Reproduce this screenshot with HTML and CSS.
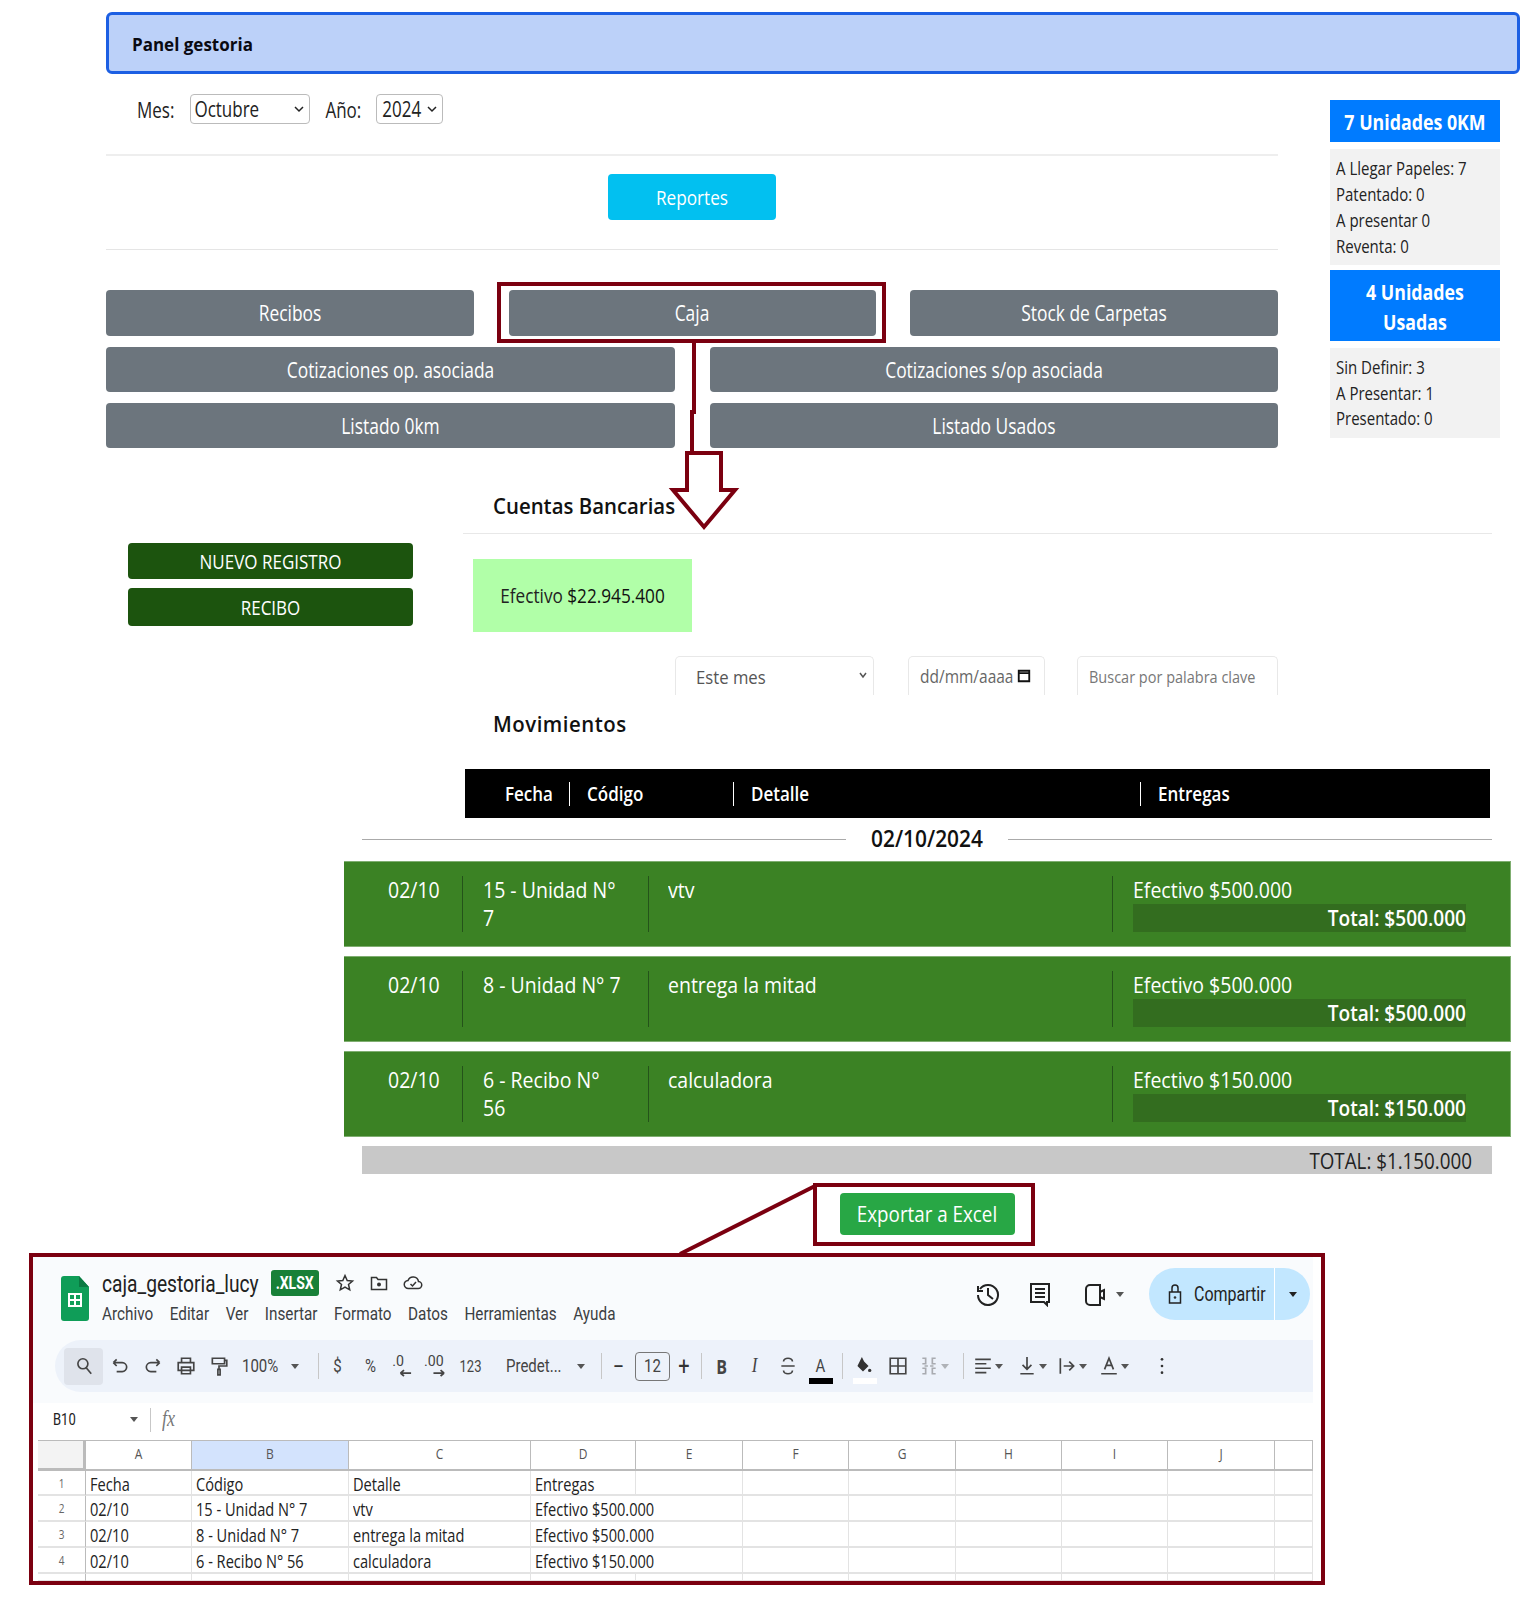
FILE: index.html
```html
<!DOCTYPE html>
<html lang="es">
<head>
<meta charset="utf-8">
<title>Panel gestoria</title>
<link rel="stylesheet" href="styles.css">
</head>
<body>
<div class="page">
  <header class="panel"><span class="t">Panel gestoria</span></header>

  <div class="top">
    <div class="top-main">
      <div class="period">
        <span class="t">Mes:</span>
        <div class="pick pick-mes"><span class="t">Octubre</span><svg class="chev" viewBox="0 0 10 8"><path d="M1 2l4 4 4-4"/></svg></div>
        <span class="t lbl-ano">Año:</span>
        <div class="pick pick-ano"><span class="t">2024</span><svg class="chev" viewBox="0 0 10 8"><path d="M1 2l4 4 4-4"/></svg></div>
      </div>
      <div class="rule rule-a"></div>
      <div class="center"><a class="btn btn-info"><span class="t">Reportes</span></a></div>
      <div class="rule rule-b"></div>
      <div class="btn-row three">
        <a class="btn btn-gray"><span class="t">Recibos</span></a>
        <a class="btn btn-gray"><span class="t">Caja</span></a>
        <a class="btn btn-gray"><span class="t">Stock de Carpetas</span></a>
      </div>
      <div class="btn-row two">
        <a class="btn btn-gray"><span class="t">Cotizaciones op. asociada</span></a>
        <a class="btn btn-gray"><span class="t">Cotizaciones s/op asociada</span></a>
      </div>
      <div class="btn-row two">
        <a class="btn btn-gray"><span class="t">Listado 0km</span></a>
        <a class="btn btn-gray"><span class="t">Listado Usados</span></a>
      </div>
    </div>
    <aside class="stats">
      <div class="stat-h"><span class="t">7 Unidades 0KM</span></div>
      <ul class="stat-l stat-a">
        <li><span class="t">A Llegar Papeles: 7</span></li>
        <li><span class="t">Patentado: 0</span></li>
        <li><span class="t">A presentar 0</span></li>
        <li><span class="t">Reventa: 0</span></li>
      </ul>
      <div class="stat-h stat-h2"><span class="t">4 Unidades</span><br><span class="t">Usadas</span></div>
      <ul class="stat-l stat-b">
        <li><span class="t">Sin Definir: 3</span></li>
        <li><span class="t">A Presentar: 1</span></li>
        <li><span class="t">Presentado: 0</span></li>
      </ul>
    </aside>
  </div>

  <div class="accounts">
    <div class="side">
      <a class="btn btn-green b1"><span class="t">NUEVO REGISTRO</span></a>
      <a class="btn btn-green b2"><span class="t">RECIBO</span></a>
    </div>
    <section class="acc-main">
      <h2 class="title title-a"><span class="t">Cuentas Bancarias</span></h2>
      <div class="rule rule-c"></div>
      <div class="bank"><span class="t">Efectivo <b>$22.945.400</b></span></div>
      <div class="filters">
        <div class="fld fld-sel"><span class="t">Este mes</span><svg class="chev" viewBox="0 0 10 8"><path d="M2 2l3 4 3-4"/></svg></div>
        <div class="fld fld-date"><span class="t">dd/mm/aaaa</span><svg class="cal" viewBox="0 0 12 12"><path d="M1.5 1.5h9v9h-9zM1.5 3.5h9"/></svg></div>
        <div class="fld fld-q"><span class="t">Buscar por palabra clave</span></div>
      </div>
      <h2 class="title title-b"><span class="t">Movimientos</span></h2>
      <div class="thead">
        <div class="th th1"><span class="t">Fecha</span></div>
        <div class="th th2"><span class="t">Código</span></div>
        <div class="th th3"><span class="t">Detalle</span></div>
        <div class="th th4"><span class="t">Entregas</span></div>
      </div>
    </section>
  </div>

  <section class="moves">
    <div class="day"><i></i><b class="t">02/10/2024</b><i></i></div>
    <article class="mv">
      <div class="c c1"><span class="t">02/10</span></div>
      <div class="c c2"><span class="t">15 - Unidad N°</span><br><span class="t">7</span></div>
      <div class="c c3"><span class="t">vtv</span></div>
      <div class="c c4"><span class="t">Efectivo $500.000</span><div class="tot"><span class="t">Total: $500.000</span></div></div>
    </article>
    <article class="mv">
      <div class="c c1"><span class="t">02/10</span></div>
      <div class="c c2"><span class="t">8 - Unidad N° 7</span></div>
      <div class="c c3"><span class="t">entrega la mitad</span></div>
      <div class="c c4"><span class="t">Efectivo $500.000</span><div class="tot"><span class="t">Total: $500.000</span></div></div>
    </article>
    <article class="mv">
      <div class="c c1"><span class="t">02/10</span></div>
      <div class="c c2"><span class="t">6 - Recibo N°</span><br><span class="t">56</span></div>
      <div class="c c3"><span class="t">calculadora</span></div>
      <div class="c c4"><span class="t">Efectivo $150.000</span><div class="tot"><span class="t">Total: $150.000</span></div></div>
    </article>
    <div class="grand"><span class="t">TOTAL: $1.150.000</span></div>
    <div class="export"><a class="btn btn-excel"><span class="t">Exportar a Excel</span></a></div>
  </section>

  <section class="sheet">
    <div class="sheet-top">
      <div class="sh-head">
        <svg class="sh-logo" viewBox="0 0 28 45"><path fill="#0f9d58" d="M3 0h15l10 11v31a3 3 0 0 1-3 3H3a3 3 0 0 1-3-3V3a3 3 0 0 1 3-3z"/><path fill="#0a7a42" d="M18 0l10 11H18z"/><path fill="none" stroke="#fff" stroke-width="2" d="M8 18h12v12H8zM14 18v12M8 24h12"/></svg>
        <div class="sh-titles">
          <div class="sh-name">
            <span class="t doc">caja_gestoria_lucy</span>
            <span class="badge"><span class="t">.XLSX</span></span>
            <svg class="ic20 star" viewBox="0 0 20 20"><path d="M10 2.5l2.2 5 5.3.5-4 3.5 1.2 5.3L10 14l-4.7 2.8 1.2-5.3-4-3.5 5.3-.5z"/></svg>
            <svg class="ic20" viewBox="0 0 20 20"><path d="M2.5 4.5h5l1.500 2h8.500v10h-15z"/><circle cx="10" cy="11.500" r="2" class="fillk"/></svg>
            <svg class="ic20" viewBox="0 0 20 20"><path d="M5.500 15.500a4 4 0 0 1-.5-8 5.500 5.500 0 0 1 10.500 1 3.500 3.500 0 0 1-.5 7zM7.500 11l2 2 3.500-4"/></svg>
          </div>
          <nav class="sh-menu">
            <span class="t m1">Archivo</span><span class="t m2">Editar</span><span class="t m3">Ver</span><span class="t m4">Insertar</span><span class="t m5">Formato</span><span class="t m6">Datos</span><span class="t m7">Herramientas</span><span class="t m8">Ayuda</span>
          </nav>
        </div>
        <div class="sh-actions">
          <svg class="ic26" viewBox="0 0 26 26"><path d="M5 8a10 10 0 1 1-2 6M3 5v5h5M13 7v7l5 4"/></svg>
          <svg class="ic26 gap-c" viewBox="0 0 26 26"><path d="M4 3h18v18h-2v3l-3-3H4zM8 8h10M8 12h10M8 16h10"/></svg>
          <svg class="ic26 gap-v" viewBox="0 0 26 26"><path d="M4 8a4 4 0 0 1 4-4h10v20H8a4 4 0 0 1-4-4zM18 11l4-2v9l-4-2" /></svg>
          <svg class="caret gap-k" viewBox="0 0 8 5"><path d="M0 0h8L4 5z"/></svg>
          <div class="share">
            <div class="share-main">
              <svg class="lock" viewBox="0 0 14 22"><path d="M1.500 9h11v11h-11zM4 9V5a3 3 0 0 1 6 0v4"/><circle cx="7" cy="14.500" r="1.300" class="fillk"/></svg>
              <span class="t">Compartir</span>
            </div>
            <div class="share-more"><svg class="caret dark" viewBox="0 0 8 5"><path d="M0 0h8L4 5z"/></svg></div>
          </div>
        </div>
      </div>

      <div class="tools">
        <div class="i sb"><svg viewBox="0 0 18 18"><circle cx="8" cy="7" r="4.500"/><path d="M11 10.500l4.500 5.500"/></svg></div>
        <div class="i"><svg viewBox="0 0 18 18"><path d="M3 6h8a3.500 3.500 0 0 1 0 8H6M3 6l3-3M3 6l3 3"/></svg></div>
        <div class="i"><svg viewBox="0 0 18 18"><path d="M15 6H7a3.500 3.500 0 0 0 0 8h5M15 6l-3-3M15 6l-3 3"/></svg></div>
        <div class="i"><svg viewBox="0 0 18 18"><path d="M5 6V2h8v4M2 6h14v7H2zM5 10h8v6H5z"/></svg></div>
        <div class="i"><svg viewBox="0 0 18 18"><path d="M3 2h11v5H3zM14 4h2v5H9v3M8 12h2v5H8z"/></svg></div>
        <div class="txt zoom"><span class="t">100%</span><svg class="caret" viewBox="0 0 8 5"><path d="M0 0h8L4 5z"/></svg></div>
        <div class="sep s1"></div>
        <div class="i"><span class="t">$</span></div>
        <div class="i"><span class="t">%</span></div>
        <div class="i small"><svg viewBox="0 0 22 22"><text x="1" y="11" class="st">.0</text><path d="M8 17h9M8 17l3-2.500M8 17l3 2.500"/></svg></div>
        <div class="i small"><svg viewBox="0 0 22 22"><text x="0" y="11" class="st">.00</text><path d="M17 17H8M17 17l-3-2.500M17 17l-3 2.500"/></svg></div>
        <div class="i n123"><span class="t">123</span></div>
        <div class="txt font"><span class="t">Predet...</span><svg class="caret" viewBox="0 0 8 5"><path d="M0 0h8L4 5z"/></svg></div>
        <div class="sep s2"></div>
        <div class="i big"><span class="t">−</span></div>
        <div class="sizebox"><span class="t">12</span></div>
        <div class="i plus big"><span class="t">+</span></div>
        <div class="sep s3"></div>
        <div class="i bold"><span class="t">B</span></div>
        <div class="i ital"><span class="t">I</span></div>
        <div class="i"><svg viewBox="0 0 18 18"><path d="M5 5a4 3 0 0 1 8 0M5 13a4 3 0 0 0 8 0M3 9h12"/></svg></div>
        <div class="i colr"><span class="t">A</span><i class="bar blk"></i></div>
        <div class="sep s4"></div>
        <div class="i colr"><svg class="fillic" viewBox="0 0 18 18"><path class="fillk" d="M8 1l2 4 4 4-5 5-5-5z"/><circle class="fillk" cx="15" cy="13" r="1.500"/></svg><i class="bar wht"></i></div>
        <div class="i"><svg viewBox="0 0 18 18"><path d="M2 2h14v14H2zM9 2v14M2 9h14"/></svg></div>
        <div class="i2 w45 muted"><svg viewBox="0 0 18 18"><path d="M3 2h3v5H3M15 2h-3v5h3M3 16h3v-5H3M15 16h-3v-5h3M8 9H5M10 9h3"/></svg><svg class="caret" viewBox="0 0 8 5"><path d="M0 0h8L4 5z"/></svg></div>
        <div class="sep s5"></div>
        <div class="i2 w44"><svg viewBox="0 0 18 18"><path d="M2 3h14M2 7h10M2 11h14M2 15h10"/></svg><svg class="caret" viewBox="0 0 8 5"><path d="M0 0h8L4 5z"/></svg></div>
        <div class="i2 w44"><svg viewBox="0 0 18 18"><path d="M9 1v11M5 8l4 4 4-4M3 16h12"/></svg><svg class="caret" viewBox="0 0 8 5"><path d="M0 0h8L4 5z"/></svg></div>
        <div class="i2 w42"><svg viewBox="0 0 18 18"><path d="M3 2v14M6 9h9M11 5l4 4-4 4"/></svg><svg class="caret" viewBox="0 0 8 5"><path d="M0 0h8L4 5z"/></svg></div>
        <div class="i2 w42"><svg viewBox="0 0 18 18"><path d="M5 12L9 2l4 10M6.500 8.500h5M2 16h14"/></svg><svg class="caret" viewBox="0 0 8 5"><path d="M0 0h8L4 5z"/></svg></div>
        <div class="i dots"><svg viewBox="0 0 18 18"><circle class="fillk" cx="9" cy="3" r="1.200"/><circle class="fillk" cx="9" cy="9" r="1.200"/><circle class="fillk" cx="9" cy="15" r="1.200"/></svg></div>
      </div>
    </div>

    <div class="fx">
      <span class="t cellref">B10</span>
      <svg class="caret fxc" viewBox="0 0 8 5"><path d="M0 0h8L4 5z"/></svg>
      <div class="sep s6"></div>
      <span class="t fxl">fx</span>
    </div>

    <div class="grid">
      <div class="corner"></div><div class="ch"><span class="t">A</span></div><div class="ch on"><span class="t">B</span></div><div class="ch"><span class="t">C</span></div><div class="ch"><span class="t">D</span></div><div class="ch"><span class="t">E</span></div><div class="ch"><span class="t">F</span></div><div class="ch"><span class="t">G</span></div><div class="ch"><span class="t">H</span></div><div class="ch"><span class="t">I</span></div><div class="ch"><span class="t">J</span></div><div class="ch"></div>

      <div class="rh"><span class="t">1</span></div><div class="cl"><span class="t">Fecha</span></div><div class="cl"><span class="t">Código</span></div><div class="cl"><span class="t">Detalle</span></div><div class="cl"><span class="t">Entregas</span></div><div class="cl"></div><div class="cl"></div><div class="cl"></div><div class="cl"></div><div class="cl"></div><div class="cl"></div><div class="cl"></div>

      <div class="rh"><span class="t">2</span></div><div class="cl"><span class="t">02/10</span></div><div class="cl"><span class="t">15 - Unidad N° 7</span></div><div class="cl"><span class="t">vtv</span></div><div class="cl wide"><span class="t">Efectivo $500.000</span></div><div class="cl"></div><div class="cl"></div><div class="cl"></div><div class="cl"></div><div class="cl"></div><div class="cl"></div>

      <div class="rh"><span class="t">3</span></div><div class="cl"><span class="t">02/10</span></div><div class="cl"><span class="t">8 - Unidad N° 7</span></div><div class="cl"><span class="t">entrega la mitad</span></div><div class="cl wide"><span class="t">Efectivo $500.000</span></div><div class="cl"></div><div class="cl"></div><div class="cl"></div><div class="cl"></div><div class="cl"></div><div class="cl"></div>

      <div class="rh"><span class="t">4</span></div><div class="cl"><span class="t">02/10</span></div><div class="cl"><span class="t">6 - Recibo N° 56</span></div><div class="cl"><span class="t">calculadora</span></div><div class="cl wide"><span class="t">Efectivo $150.000</span></div><div class="cl"></div><div class="cl"></div><div class="cl"></div><div class="cl"></div><div class="cl"></div><div class="cl"></div>

      <div class="rh"></div><div class="cl"></div><div class="cl"></div><div class="cl"></div><div class="cl"></div><div class="cl"></div><div class="cl"></div><div class="cl"></div><div class="cl"></div><div class="cl"></div><div class="cl"></div><div class="cl"></div>
    </div>
  </section>

  <svg class="notes" viewBox="0 0 1522 1600" aria-hidden="true">
    <rect x="499" y="284" width="385" height="57"/>
    <path d="M694 343V412H692V453"/>
    <path d="M687 453H721V490H735L704 527 673 490H687Z" fill="#fff"/>
    <rect x="815" y="1185" width="218" height="59"/>
    <path d="M815 1186L680 1254"/>
  </svg>
</div>
</body>
</html>
```
FILE: styles.css
```css
* { box-sizing: border-box; }
html, body { margin: 0; padding: 0; background: #fff; }
body { font-family: "Open Sans", "Noto Sans", sans-serif; font-size: 16px; color: #212529; }
ul { list-style: none; margin: 0; padding: 0; }
h2 { margin: 0; }
.page { position: relative; width: 1522px; height: 1600px; overflow: hidden; padding-top: 12px; }
.t { display: inline-block; transform: scaleY(1.25); white-space: nowrap; }

.panel { margin-left: 106px; width: 1414px; height: 62px; border: 3px solid #1c5fe3; border-radius: 6px; background: #bcd1f9; padding-left: 23px; line-height: 60px; font-weight: 700; color: #0a0a12; font-size: 17px; }
.panel .t { transform: scaleY(1.08); }

.top { display: flex; margin-left: 106px; }
.top-main { width: 1172px; }
.period { display: flex; align-items: center; height: 30px; margin-top: 20px; padding-left: 31px; font-size: 17px; color: #222; }
.pick { position: relative; height: 30px; margin-left: 16px; background: #fff; border: 1px solid #bbb; border-radius: 4px; padding-left: 3px; line-height: 28px; }
.pick-mes { width: 120px; }
.pick-ano { width: 67px; margin-left: 15px; padding-left: 5px; }
.lbl-ano { margin-left: 15px; }
.chev { position: absolute; right: 5px; top: 10px; width: 10px; height: 8px; fill: none; stroke: #222; stroke-width: 1.500; }

.rule { height: 2px; background: #eee; }
.rule-a { margin-top: 30px; }
.center { display: flex; justify-content: center; margin-top: 18px; }
.rule-b { margin-top: 29px; height: 1px; background: #e5e5e5; }

.btn { display: flex; align-items: center; justify-content: center; color: #fff; border-radius: 4px; }
.btn-info { width: 168px; height: 46px; background: #02c0f0; font-size: 17.200px; }
.btn-info .t { transform: scaleY(1.2); }
.btn-row { display: grid; height: 45px; margin-top: 11px; }
.btn-row.three { grid-template-columns: 368px 367px 368px; gap: 34.500px; height: 46px; margin-top: 40px; }
.btn-row.two { grid-template-columns: 569px 568px; gap: 35px; }
.btn-gray { background: #6c757d; font-size: 17.400px; }
.btn-gray .t { transform: scaleY(1.2); }

.stats { width: 170px; margin-left: 52px; margin-top: 26px; color: #222; font-size: 15px; }
.stat-h { background: #007bff; color: #fff; font-weight: 700; font-size: 17.800px; text-align: center; height: 42px; line-height: 44px; }
.stat-h .t { transform: scaleY(1.2); }
.stat-h2 { height: 71px; line-height: 30px; padding-top: 7px; margin-top: 5px; }
.stat-l { margin-top: 7px; background: #f2f2f2; padding: 5px 6px; line-height: 26px; }
.stat-a { height: 116px; }
.stat-b { height: 90px; padding-top: 7px; line-height: 25.500px; }

.accounts { display: flex; margin-top: 30px; height: 340px; }
.side { width: 285px; margin-left: 128px; padding-top: 65px; }
.btn-green { background: #1c540e; font-size: 17px; }
.btn-green .t { transform: scaleY(1.12); }
.b1 { height: 36px; }
.b2 { height: 38px; margin-top: 9px; }
.acc-main { width: 1029px; margin-left: 50px; }
.title { font-size: 20.400px; font-weight: 600; color: #111; line-height: 28px; padding-left: 30px; }
.title .t { transform: scaleY(1.1); }
.title-a { padding-top: 13px; }
.rule-c { margin-top: 14px; height: 1px; background: #e8e8e8; }
.bank { width: 219px; height: 73px; margin: 25px 0 0 10px; background: #b1ffa8; display: flex; align-items: center; justify-content: center; font-size: 17.200px; color: #222; }
.bank .t { transform: scaleY(1.12); }
.bank b { font-weight: 400; color: #111; }
.filters { display: flex; margin: 24px 0 0 212px; font-size: 16.700px; color: #555; }
.fld { position: relative; height: 39px; background: #fff; border: 1px solid #e8e8e8; border-bottom: 0; border-radius: 5px 5px 0 0; display: flex; align-items: center; }
.fld .t { transform: scaleY(1.12); }
.fld-sel { width: 199px; padding-left: 20px; }
.fld-sel .chev { right: 5px; top: 14px; stroke: #555; }
.fld-date { width: 137px; margin-left: 34px; padding-left: 11px; color: #666; font-size: 15.500px; }
.cal { width: 14px; height: 14px; margin-left: 4px; fill: none; stroke: #111; stroke-width: 1.600; }
.fld-q { width: 201px; margin-left: 32px; padding-left: 11px; color: #777; font-size: 14.500px; }
.title-b { margin-top: 14px; font-weight: 600; letter-spacing: .5px; }
.thead { display: grid; grid-template-columns: 104px 164px 407px 1fr; margin: 32px 0 0 2px; width: 1025px; height: 49px; background: #000; color: #fff; font-weight: 600; font-size: 17px; align-items: center; }
.thead .t { transform: scaleY(1.15); }
.th { height: 24px; line-height: 24px; padding-left: 17px; border-left: 1px solid #fff; }
.th1 { padding-left: 40px; border-left: 0; }

.moves { margin-left: 344px; width: 1167px; }
.day { display: flex; align-items: center; height: 43px; margin: 0 19px 0 18px; font-size: 20.900px; color: #111; }
.day i { flex: 1; height: 1px; background: #aaa; }
.day b { margin: 0 25px 4px; font-weight: 600; transform: scaleY(1.12); }
.mv { display: grid; grid-template-columns: 119px 186px 464px 1fr; height: 86px; padding: 15px 0; background: #3b8224; border: 1px solid #7fae70; border-width: 1px 1px 1px 0; margin-bottom: 9px; color: #fff; font-size: 19.500px; line-height: 28px; }
.mv .t { transform: scaleY(1.15); }
.c { height: 56px; border-right: 1px solid #24531a; padding-left: 20px; margin-top: -1px; }
.c1 { padding-left: 44px; }
.c3 { padding-left: 19px; }
.c4 { border-right: 0; padding-right: 44px; }
.tot { height: 28px; background: #336d1f; text-align: right; font-weight: 600; font-size: 19.100px; }
.grand { height: 28px; margin: 0 19px 0 18px; background: #c8c8c8; color: #222; font-size: 18.800px; line-height: 30px; text-align: right; padding-right: 20px; }
.grand .t { transform: scaleY(1.12); }
.export { display: flex; justify-content: center; margin-top: 19px; padding-right: 1px; }
.btn-excel { width: 175px; height: 42px; background: #28a745; font-size: 18.800px; }
.btn-excel .t { transform: scaleY(1.18); }

.sheet { margin: 18px 0 0 29px; width: 1296px; height: 332px; border: 4px solid #7b0010; background: #fff; font-family: "Roboto", "Open Sans", sans-serif; color: #333; position: relative; overflow: hidden; }
.sheet-top { margin-right: 8px; height: 146px; background: #f9fbfd; }
.sh-head { display: flex; height: 83px; padding: 19px 0 0 28px; }
.sh-logo { width: 28px; height: 45px; }
.sh-titles { margin-left: 13px; margin-top: -7px; }
.sh-name { display: flex; align-items: center; height: 28px; font-size: 19.200px; color: #222; }
.badge { margin-left: 12px; width: 48px; height: 26px; border-radius: 3px; background: #188038; color: #fff; font-size: 14px; font-weight: 700; text-align: center; line-height: 26px; }
.ic20 { width: 20px; height: 20px; margin-left: 14px; fill: none; stroke: #333; stroke-width: 1.500; }
.star { margin-left: 16px; }
.sh-menu { display: flex; margin-top: 7px; font-size: 15.300px; color: #3c4043; line-height: 20px; }
.m2, .m3, .m4, .m5, .m6, .m7, .m8 { margin-left: 16.500px; }
.fillk { fill: #333; stroke: none; }
.sh-actions { display: flex; align-items: center; margin-left: auto; height: 52px; margin-top: -8px; }
.ic26 { width: 26px; height: 26px; fill: none; stroke: #222; stroke-width: 2; }
.gap-c { margin-left: 26px; }
.gap-v { margin-left: 29px; }
.caret { width: 8px; height: 5px; fill: #555; flex: none; }
.gap-k { margin-left: 8px; }
.share { display: flex; width: 161px; height: 52px; margin-left: 25px; margin-right: 3px; border-radius: 26px; background: #c2e7ff; overflow: hidden; font-size: 16px; color: #222; }
.share-main { display: flex; align-items: center; width: 126px; padding-left: 19px; border-right: 1px solid #fff; }
.share-main .t { margin-left: 12px; }
.lock { width: 14px; height: 22px; fill: none; stroke: #222; stroke-width: 1.500; }
.share-more { flex: 1; display: flex; align-items: center; justify-content: center; }
.dark { fill: #222; }

.tools { display: flex; align-items: center; margin-left: 22px; height: 52px; padding-left: 9px; background: #edf2fa; border-radius: 26px 0 0 26px; font-size: 15px; color: #444; }
.tools svg:not(.caret) { width: 20px; height: 20px; fill: none; stroke: #444; stroke-width: 1.500; flex: none; }
.tools .small svg { width: 26px; height: 26px; }
.tools .fillic { margin-right: 4px; }
.i { position: relative; width: 33px; height: 37px; flex: none; display: flex; align-items: center; justify-content: center; }
.sb { width: 39px; background: #dfe3eb; border-radius: 4px; }
.txt { display: flex; align-items: center; flex: none; }
.zoom { width: 75px; padding-left: 7px; }
.zoom .caret { margin-left: 13px; }
.font { width: 107px; padding-left: 18px; }
.font .caret { margin-left: 15px; }
.sep { width: 1px; height: 26px; background: #c7c7c7; flex: none; }
.s1 { margin: 0 2px 0 8px; }
.s2 { margin-left: 6px; }
.s3 { margin: 0 3px; }
.s4 { margin: 0 3px 0 5px; }
.s5 { margin: 0 4px; }
.n123 { width: 35px; font-size: 13px; }
.st { font: 12px "Roboto", sans-serif; fill: #444; stroke: none; }
.big { font-size: 20px; color: #333; }
.sizebox { width: 35px; height: 29px; flex: none; border: 1px solid #777; border-radius: 4px; text-align: center; line-height: 27px; font-size: 15px; }
.plus { width: 28px; }
.bold { font-weight: 700; font-size: 16px; font-family: "Open Sans", sans-serif; }
.ital { font-style: italic; font-family: "Liberation Serif", serif; font-size: 17px; }
.colr { flex-direction: column; }
.bar { position: absolute; left: 5px; bottom: 1px; width: 24px; height: 6px; }
.blk { background: #000; }
.wht { background: #fff; }
.i2 { display: flex; align-items: center; flex: none; gap: 2px; padding-left: 5px; }
.w45 { width: 45px; }
.w44 { width: 44px; }
.w42 { width: 42px; padding-left: 1px; }
.muted { opacity: .4; }
.dots { margin-left: 5px; }
.i + .s4 + .colr { margin-left: 2px; }

.fx { display: flex; align-items: center; height: 37px; padding: 0 0 4px 20px; font-size: 13px; color: #222; }
.cellref { width: 77px; }
.s6 { margin-left: 12px; height: 24px; }
.fxl { margin-left: 11px; font-style: italic; font-family: "Liberation Serif", serif; font-size: 18px; color: #777; }

.grid { display: grid; width: 1275px; margin-left: 5px; grid-template-columns: 48px 106px 157px 182px 105px 107px 106px 107px 106px 106px 107px 38px; grid-template-rows: 30px 25px 26px 26px 26px 8px; border-top: 1px solid #bbb; font-size: 14.600px; line-height: 24px; color: #222; font-family: "Open Sans", sans-serif; }
.corner { background: #f3f3f3; border-right: 3px solid #bbb; border-bottom: 3px solid #bbb; }
.ch { border-right: 1px solid #bbb; border-bottom: 2px solid #bbb; text-align: center; font-size: 12px; color: #555; line-height: 25px; }
.ch.on { background: #d3e3fd; }
.ch:last-child { border-right: 0; }
.rh { border-right: 1px solid #bbb; border-bottom: 2px solid #e3e3e3; text-align: center; font-size: 10px; color: #666; }
.cl { border-right: 1px solid #e3e3e3; border-bottom: 2px solid #e3e3e3; padding: 1px 0 0 4px; white-space: nowrap; }
.cl .t { transform: scaleY(1.2); }
.wide { grid-column: span 2; }

.notes { position: absolute; left: 0; top: 0; width: 1522px; height: 1600px; fill: none; stroke: #7b0010; stroke-width: 4; pointer-events: none; }
```
